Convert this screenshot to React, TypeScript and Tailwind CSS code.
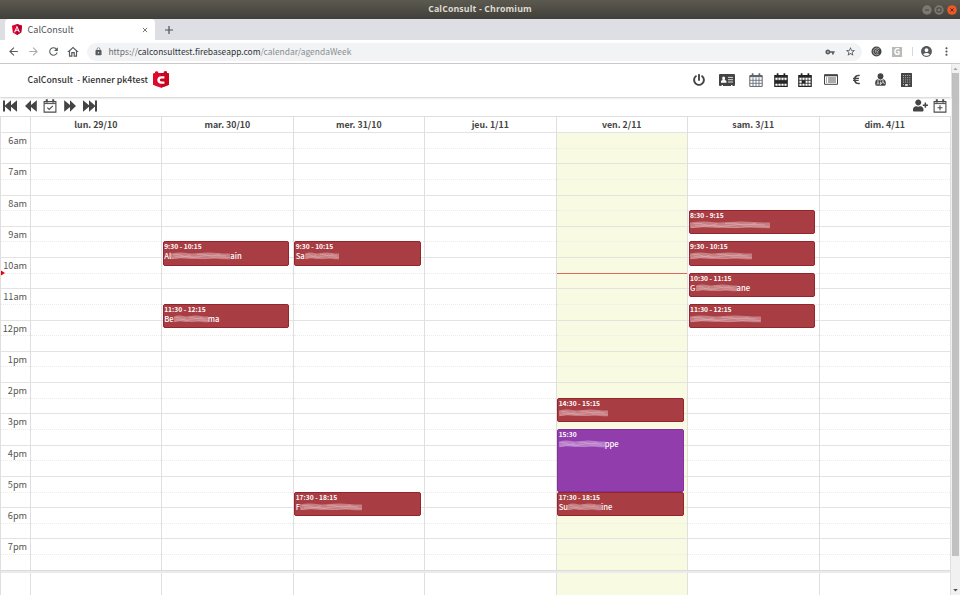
import type { CSSProperties, ReactNode } from "react";
import { FaEuroSign, FaPowerOff, FaUserPlus } from "react-icons/fa";
import {
  MdAccountCircle,
  MdArrowBack,
  MdArrowForward,
  MdLock,
  MdMoreVert,
  MdOutlineHome,
  MdRefresh,
  MdStarBorder,
  MdVpnKey,
} from "react-icons/md";

interface CalendarEvent {
  start: number;
  end: number;
  time: string;
  // visible start and end of the name, the middle is scribbled over
  head: string;
  tail?: string;
  smudge: number;
  purple?: boolean;
}

interface Day {
  label: string;
  today?: boolean;
  events: CalendarEvent[];
}

const FIRST_HOUR = 6;
const HOUR_HEIGHT = 31.28;

const hours = [
  "6am", "7am", "8am", "9am", "10am", "11am", "12pm",
  "1pm", "2pm", "3pm", "4pm", "5pm", "6pm", "7pm",
];

const days: Day[] = [
  { label: "lun. 29/10", events: [] },
  {
    label: "mar. 30/10",
    events: [
      { start: 9.5, end: 10.25, time: "9:30 - 10:15", head: "Al", tail: "ain", smudge: 59 },
      { start: 11.5, end: 12.25, time: "11:30 - 12:15", head: "Be", tail: "ma", smudge: 34 },
    ],
  },
  {
    label: "mer. 31/10",
    events: [
      { start: 9.5, end: 10.25, time: "9:30 - 10:15", head: "Sa", smudge: 34 },
      { start: 17.5, end: 18.25, time: "17:30 - 18:15", head: "F", smudge: 62 },
    ],
  },
  { label: "jeu. 1/11", events: [] },
  {
    label: "ven. 2/11",
    today: true,
    events: [
      { start: 14.5, end: 15.25, time: "14:30 - 15:15", head: "", smudge: 49 },
      { start: 15.5, end: 17.5, time: "15:30", head: "", tail: "ppe", smudge: 46, purple: true },
      { start: 17.5, end: 18.25, time: "17:30 - 18:15", head: "Su", tail: "ine", smudge: 33 },
    ],
  },
  {
    label: "sam. 3/11",
    events: [
      { start: 8.5, end: 9.25, time: "8:30 - 9:15", head: "", smudge: 80 },
      { start: 9.5, end: 10.25, time: "9:30 - 10:15", head: "", smudge: 62 },
      { start: 10.5, end: 11.25, time: "10:30 - 11:15", head: "G", tail: "ane", smudge: 41 },
      { start: 11.5, end: 12.25, time: "11:30 - 12:15", head: "", smudge: 71 },
    ],
  },
  { label: "dim. 4/11", events: [] },
];

function offset(hour: number) {
  return (hour - FIRST_HOUR) * HOUR_HEIGHT;
}

function Slot({ className, children }: { className: string; children: ReactNode }) {
  return (
    <span className={`flex shrink-0 items-center justify-center ${className}`}>
      {children}
    </span>
  );
}

function AngularLogo() {
  return (
    <svg width="10" height="11" viewBox="0 0 20 22">
      <path d="M10 0 20 3.6 18.4 17 10 22 1.6 17 0 3.6Z" fill="#dd0031" />
      <path d="M10 0 20 3.6 18.4 17 10 22Z" fill="#b3002d" />
      <path d="M10 3 16 16.5H13.6L12.4 13.4H7.6L6.4 16.5H4ZM10 7.6 8.4 11.4H11.6Z" fill="#fff" />
    </svg>
  );
}

function CalConsultLogo() {
  return (
    <svg width="18" height="17" viewBox="0 0 18 17">
      <path d="M1 2.5 3 2V.8Q4.5-.2 6.2.8V2H11.8V.8Q13.5-.2 15 .8V2L17 2.5V13.7L14 15 9 16.7 4 15 1 13.7Z" fill="#dd0a2c" />
      <path d="M9 2H11.8V.8Q13.5-.2 15 .8V2L17 2.5V13.7L14 15 9 16.7Z" fill="#c8061f" />
      <path d="M12.4 6.4H9.4Q6.6 6.6 6.5 8.9Q6.6 11.5 9.4 11.6H12.4" fill="none" stroke="#fff" strokeWidth="2.4" />
    </svg>
  );
}

function SkipIcon({ bar, flip }: { bar?: boolean; flip?: boolean }) {
  return (
    <svg
      width={bar ? 14 : 12}
      height="12"
      viewBox={bar ? "0 0 14 12" : "3 0 12 12"}
      className={flip ? "-scale-x-100" : ""}
      fill="#444"
    >
      {bar ? (
        <path d="M0 .5H2V5.4L8 .2V5.2L14 .2V11.8L8 6.8V11.8L2 6.6V11.5H0Z" />
      ) : (
        <path d="M9 .2V5L14.8.2V11.8L9 7V11.8L3 6Z" />
      )}
    </svg>
  );
}

function OutlineCalendar({ mark }: { mark: "check" | "plus" }) {
  return (
    <svg width="14" height="14" viewBox="0 0 14 14" fill="none" stroke="#4c4c4c">
      <path d="M1.1 2.6H12.9V13.1H1.1Z" strokeWidth="1.1" />
      <path d="M1.2 4.6H12.8" />
      <path d="M3.8.3V3.5M10.2.3V3.5" strokeWidth="2" />
      {mark === "check" ? (
        <path d="M4.3 8.7 6.2 10.5 9.8 6.8" strokeWidth="1.1" />
      ) : (
        <path d="M7 6.3V11.3M4.5 8.8H9.5" strokeWidth="1.1" />
      )}
    </svg>
  );
}

function GridCalendar({ view }: { view: "month" | "week" | "day" }) {
  const color = view === "month" ? "#5c6670" : "#252525";
  return (
    <svg width="14" height="14" viewBox="0 0 14 14" fill="none" stroke={color}>
      <path d="M.8 2.5H13.2V13.4H.8Z" strokeWidth={view === "month" ? 1 : 1.2} />
      <path d="M.8 3.6H13.2" strokeWidth={view === "month" ? 1.2 : 2.2} />
      <path d="M3.6.3V3.4M10.4.3V3.4" strokeWidth="1.7" />
      <path d="M4 4.5V13.4M7 4.5V13.4M10 4.5V13.4M.8 7.3H13.2M.8 10.3H13.2" strokeWidth=".8" />
      {view === "week" && <path d="M.8 8.8H13.2" strokeWidth="3" />}
      {view === "day" && <path d="M4 8.8H7.3" strokeWidth="3" />}
    </svg>
  );
}

function IdCardIcon() {
  return (
    <svg width="16" height="12" viewBox="0 0 16 12">
      <path d="M1 0H15Q16 0 16 1V11Q16 12 15 12H13.5V11H12V12H4V11H2.5V12H1Q0 12 0 11V1Q0 0 1 0Z" fill="#444" />
      <path d="M2 8.8V7.2Q2.2 6.2 3.7 6Q2.9 4.8 3.3 3.6Q4.1 2 5.7 3Q6.7 4.4 5.6 6Q7.4 6.2 7.5 7.4V8.8Z" fill="#fff" />
      <path d="M9 3.4H14M9 5.7H14M9 8H14" stroke="#ddd" strokeWidth="1" />
    </svg>
  );
}

function ListIcon() {
  return (
    <svg width="14" height="11" viewBox="0 0 14 11" fill="none" stroke="#444">
      <path d="M.5.7H13.5V10.3H.5Z" />
      <path d="M.5 1.5H13.5" strokeWidth="1.6" />
      <path d="M2 4H3M2 6H3M2 8H3M4 4H12M4 6H12M4 8H12" strokeWidth=".9" />
    </svg>
  );
}

function DoctorIcon() {
  return (
    <svg width="11" height="13" viewBox="0 0 11 13">
      <path d="M5.5.3Q8.4.4 8.4 3.3Q8 6.4 5.5 6.7Q3 6.4 2.6 3.3Q2.6.4 5.5.3Z" fill="#444" />
      <path d="M2.7 6.3Q5.5 8.6 8.3 6.3Q10.8 6.9 10.9 10.4Q10.9 12.7 9.3 12.7H1.7Q.1 12.7.1 10.4Q.2 6.9 2.7 6.3Z" fill="#444" />
      <path d="M3 7V10M2 11.5V10.5Q3 9.2 4 10.5V11.5M8 7V9M6.6 11V9.8Q8 8.4 9.2 9.8V11M5.5 8.6V12" fill="none" stroke="#fff" strokeWidth=".7" />
    </svg>
  );
}

function BuildingIcon() {
  return (
    <svg width="11" height="14" viewBox="0 0 11 14">
      <path d="M.5 0H10.5Q11 0 11 .5V13.5Q11 14 10.5 14H.5Q0 14 0 13.5V.5Q0 0 .5 0Z" fill="#444" />
      <path
        d="M2 2.5H9.4M2 4.7H9.4M2 6.9H9.4M2 9.1H9.4"
        stroke="#c4c4c4"
        strokeWidth=".9"
        strokeDasharray="1 1.1"
      />
      <path d="M4.2 11H6.8V13H4.2ZM2 10.9H3V11.8H2ZM8.2 10.9H9.2V11.8H8.2Z" fill="#d8d8d8" />
    </svg>
  );
}

function Scribble({ width, purple }: { width: number; purple?: boolean }) {
  return (
    <svg
      width={width}
      height="10"
      viewBox="0 0 80 10"
      preserveAspectRatio="none"
      fill="none"
      stroke={purple ? "#d0a6dc" : "#dcaaad"}
      className="shrink-0"
    >
      <path
        d="M0 5.4C8 4 16 4.2 24 5C34 5.8 41 4.2 51 4.4C61 4.4 67 5.6 80 5.4"
        strokeWidth="5.6"
        opacity=".6"
      />
      <path
        d="M1 7.2C10 7.8 19 4.4 31 6.4S49 7.6 61 6.3S73 7.6 79 6.6M3 3.7Q11 2.6 15 4.6T27 3.6M35 3.4Q44 2.6 50 4.4T66 3.2M5 5.4Q14 4.6 22 5.8T42 5.2T75 5"
        strokeWidth="1"
        opacity=".75"
      />
    </svg>
  );
}

function EventCard({ event }: { event: CalendarEvent }) {
  const style: CSSProperties = {
    top: offset(event.start),
    height: offset(event.end) - offset(event.start) + 0.6,
  };
  return (
    <div
      style={style}
      className={`absolute right-[3.4px] left-[0.6px] overflow-hidden rounded-[2px] border text-white ${
        event.purple ? "border-[#84309f] bg-[#913dac]" : "border-[#98242b] bg-[#a83e43]"
      }`}
    >
      <p className="-mt-px h-[10px] pl-[0.5px] text-[6.7px] leading-[10px] font-bold whitespace-nowrap">
        {event.time}
      </p>
      <div className="flex h-[10px] items-center pl-[0.5px] text-[7.7px] leading-[10px] font-medium whitespace-nowrap">
        {event.head}
        <Scribble width={event.smudge} purple={event.purple} />
        {event.tail}
      </div>
    </div>
  );
}

function DayColumn({ day }: { day: Day }) {
  return (
    <div
      className={`relative min-w-0 flex-1 border-l border-[#dfdfdf] ${
        day.today ? "bg-[#f8fae2]" : ""
      }`}
    >
      {hours.map((hour) => (
        <div key={hour} className="h-[31.28px] border-t border-[#e3e3e3]">
          <div className="h-[15.64px] border-b border-dotted border-[#ebebeb]" />
        </div>
      ))}
      {day.events.map((event) => (
        <EventCard key={event.start} event={event} />
      ))}
      {day.today && (
        <div className="absolute top-[141px] right-0 left-0 h-px bg-[#df665d]" />
      )}
    </div>
  );
}

function BrowserChrome() {
  return (
    <>
      <div className="flex h-[19px] items-center bg-linear-to-b from-[#5c5a50] to-[#403f39]">
        <div className="w-[60px]" />
        <p className="flex-1 text-center font-['Open_Sans',sans-serif] text-[8.8px] leading-none font-bold tracking-[0.12px] text-[#dfdbd2]">
          CalConsult - Chromium
        </p>
        <div className="flex w-[60px] justify-end gap-[2.5px] pr-[3.5px]">
          <svg width="10" height="10" viewBox="0 0 10 10">
            <circle cx="5" cy="5" r="4.7" fill="#7b7971" />
            <path d="M3 5H7" stroke="#45443d" />
          </svg>
          <svg width="10" height="10" viewBox="0 0 10 10">
            <circle cx="5" cy="5" r="4.7" fill="#7b7971" />
            <path d="M3 3H7V7H3Z" stroke="#45443d" fill="none" />
          </svg>
          <svg width="10" height="10" viewBox="0 0 10 10">
            <circle cx="5" cy="5" r="4.8" fill="#eb5928" />
            <path d="M3.4 3.4 6.6 6.6M6.6 3.4 3.4 6.6" stroke="#642a18" />
          </svg>
        </div>
      </div>

      <div className="flex h-[21px] items-center bg-[#dedfe5] pl-[5px]">
        <div className="flex h-full w-[150px] items-center rounded-t-[4px] bg-white pr-[7px] pl-[7px]">
          <AngularLogo />
          <span className="ml-[5.5px] flex-1 text-[9.1px] leading-none text-[#505357]">
            CalConsult
          </span>
          <svg width="6" height="6" viewBox="0 0 7 7" stroke="#5f6368">
            <path d="M1 1 6 6M6 1 1 6" />
          </svg>
        </div>
        <svg width="8" height="8" viewBox="0 0 8 8" stroke="#505357" className="ml-[10px]">
          <path d="M4 0V8M0 4H8" strokeWidth="1.2" />
        </svg>
      </div>

      <div className="flex h-6 items-center border-b border-[#cfcbcb] bg-white pl-[7px] text-[#56595d]">
        <MdArrowBack size={13} />
        <MdArrowForward size={13} className="ml-[7px] text-[#a9abae]" />
        <MdRefresh size={13} className="ml-[7px]" />
        <MdOutlineHome size={14} className="ml-[6px]" />
        <div className="ml-[7px] flex h-[18px] w-[775px] items-center rounded-full bg-[#f1f3f4] pr-[6px] pl-[7px]">
          <MdLock size={9} />
          <p className="ml-[5.5px] flex-1 text-[8.45px] leading-none text-[#8a8d91]">
            <span className="text-[#6b6e72]">https://</span>
            <span className="text-[#303236]">calconsulttest.firebaseapp.com</span>
            /calendar/agendaWeek
          </p>
          <MdVpnKey size={10} />
          <MdStarBorder size={11} className="ml-[10px]" />
        </div>
        <svg width="11" height="11" viewBox="0 0 11 11" className="ml-[9px]">
          <circle cx="5.5" cy="5.5" r="5" fill="#414141" />
          <path
            d="M8.5 3Q5.8.9 3.2 3Q1 5.7 3.2 8Q5.5 9.8 8 8M8.2 5Q6.8 2.7 4.5 4.2Q3.5 6.5 5.6 7.2Q7.5 7 6.8 5.6L5.3 5.3"
            fill="none"
            stroke="#c8c8c8"
            strokeWidth=".7"
          />
        </svg>
        <span className="ml-[10px] flex size-[10px] items-center justify-center bg-[#b9b9b9] text-[9px] leading-none font-bold text-white">
          G
        </span>
        <span className="ml-[10px] h-[9px] w-px bg-[#d5d7da]" />
        <MdAccountCircle size={13} className="ml-[7px]" />
        <MdMoreVert size={13} className="ml-[7px]" />
      </div>
    </>
  );
}

function AppHeader() {
  return (
    <header className="relative flex h-[33px] shrink-0 items-center bg-white pb-[1.5px] pl-[27.5px] shadow-[0_1px_2px_rgba(0,0,0,0.2)]">
      <span className="pt-px text-[8.75px] leading-none font-medium whitespace-pre text-[#333]">
        {"CalConsult  - Kienner pk4test"}
      </span>
      <span className="ml-[4px]">
        <CalConsultLogo />
      </span>
      <nav className="mr-[30px] ml-auto flex items-center text-[#444]">
        <Slot className="w-7"><FaPowerOff size={12} /></Slot>
        <Slot className="w-7"><IdCardIcon /></Slot>
        <Slot className="w-[30px]"><GridCalendar view="month" /></Slot>
        <Slot className="w-5"><GridCalendar view="week" /></Slot>
        <Slot className="w-[27px]"><GridCalendar view="day" /></Slot>
        <Slot className="w-[25px]"><ListIcon /></Slot>
        <Slot className="w-[26px]"><FaEuroSign size={11} /></Slot>
        <Slot className="w-[22px]"><DoctorIcon /></Slot>
        <Slot className="w-[30px]"><BuildingIcon /></Slot>
      </nav>
    </header>
  );
}

function Toolbar() {
  return (
    <div className="flex h-[19px] shrink-0 items-center justify-between pr-[4px] pb-[2px] pl-[3px]">
      <div className="flex items-center">
        <SkipIcon bar />
        <span className="ml-[7.5px] flex"><SkipIcon /></span>
        <span className="ml-[6px] flex"><OutlineCalendar mark="check" /></span>
        <span className="ml-[7px] flex"><SkipIcon flip /></span>
        <span className="ml-[7.5px] flex"><SkipIcon bar flip /></span>
      </div>
      <div className="flex items-center gap-[5px] text-[#444]">
        <FaUserPlus size={15} />
        <OutlineCalendar mark="plus" />
      </div>
    </div>
  );
}

function WeekGrid() {
  return (
    <div className="flex min-h-0 flex-1 flex-col overflow-hidden border-x border-t border-[#dfdfdf]">
      <div className="flex h-[15px] shrink-0">
        <div className="w-[28.6px] shrink-0" />
        {days.map((day) => (
          <div
            key={day.label}
            className="flex flex-1 items-center justify-center border-l border-[#dfdfdf] pt-px text-[8.8px] leading-none font-bold text-[#444]"
          >
            {day.label}
          </div>
        ))}
      </div>

      <div className="relative flex shrink-0">
        <div className="w-[28.6px] shrink-0">
          {hours.map((hour) => (
            <div key={hour} className="h-[31.28px] border-t border-[#e3e3e3]">
              <div className="h-[15.64px] border-b border-dotted border-[#ebebeb] pr-[2.5px] text-right text-[9.2px] leading-[14px] text-[#555]">
                {hour}
              </div>
            </div>
          ))}
        </div>
        {days.map((day) => (
          <DayColumn key={day.label} day={day} />
        ))}
        <div className="absolute top-[138px] -left-px size-0 border-y-[3px] border-l-[5px] border-y-transparent border-l-red-600" />
      </div>

      <div className="h-[3px] shrink-0 border-t border-[#dcdcdc] bg-[#ebebeb]" />
      <div className="flex min-h-0 flex-1">
        <div className="w-[28.6px] shrink-0" />
        {days.map((day) => (
          <div
            key={day.label}
            className={`flex-1 border-l border-[#dfdfdf] ${day.today ? "bg-[#f8fae2]" : ""}`}
          />
        ))}
      </div>
    </div>
  );
}

function Scrollbar() {
  return (
    <div className="flex w-[9px] shrink-0 flex-col items-center bg-[#f1f1f1]">
      <svg width="7" height="9" viewBox="0 0 7 9">
        <path d="M1.3 6 3.5 3.7 5.7 6Z" fill="#a3a3a3" />
      </svg>
      <div className="h-[483px] w-[7px] bg-[#c1c1c1]" />
      <svg width="7" height="9" viewBox="0 0 7 9" className="mt-auto">
        <path d="M1.2 3 3.5 5.5 5.8 3Z" fill="#505050" />
      </svg>
    </div>
  );
}

export default function App() {
  return (
    <div className="flex h-[595px] w-[960px] flex-col overflow-hidden bg-white font-['Noto_Sans_CJK_SC',sans-serif]">
      <BrowserChrome />
      <div className="flex min-h-0 flex-1">
        <main className="flex min-w-0 flex-1 flex-col">
          <AppHeader />
          <Toolbar />
          <WeekGrid />
        </main>
        <Scrollbar />
      </div>
    </div>
  );
}
